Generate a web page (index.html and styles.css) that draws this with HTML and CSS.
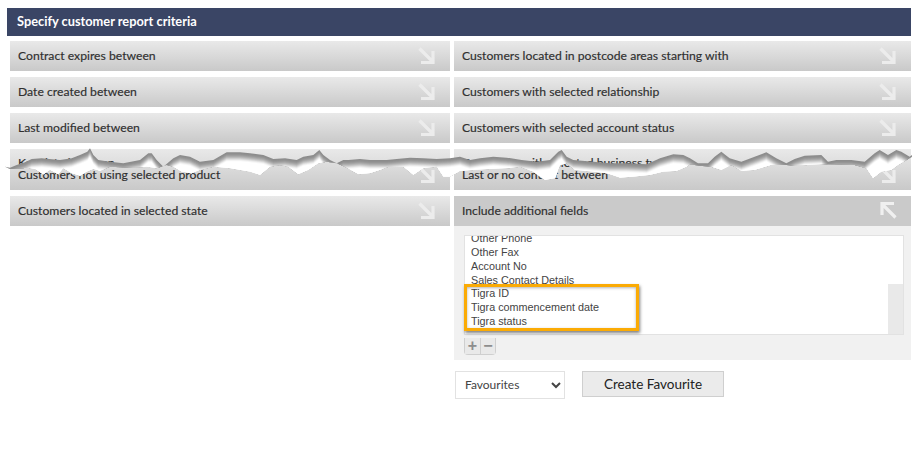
FILE: index.html
```html
<!DOCTYPE html>
<html lang="en">
<head>
<meta charset="utf-8">
<title>Specify customer report criteria</title>
<link rel="stylesheet" href="styles.css">
</head>
<body>
<svg width="0" height="0" class="defs" aria-hidden="true">
  <symbol id="arrow" viewBox="0 0 18 18">
    <path d="M1.5 1.5 L15 15 M15 4 V15.5 H3" fill="none" stroke="currentColor" stroke-width="3.2"/>
  </symbol>
</svg>
<main class="page">
  <h1 class="title">Specify customer report criteria</h1>
  <div class="grid">
    <div class="col">
      <div class="row"><span>Contract expires between</span><svg class="arrow"><use href="#arrow"/></svg></div>
      <div class="row"><span>Date created between</span><svg class="arrow"><use href="#arrow"/></svg></div>
      <div class="row"><span>Last modified between</span><svg class="arrow"><use href="#arrow"/></svg></div>
      <div class="row torn"><span class="cut">Key date between</span><span>Customers not using selected product</span><svg class="arrow"><use href="#arrow"/></svg></div>
      <div class="row"><span>Customers located in selected state</span><svg class="arrow"><use href="#arrow"/></svg></div>
    </div>
    <div class="col">
      <div class="row"><span>Customers located in postcode areas starting with</span><svg class="arrow"><use href="#arrow"/></svg></div>
      <div class="row"><span>Customers with selected relationship</span><svg class="arrow"><use href="#arrow"/></svg></div>
      <div class="row"><span>Customers with selected account status</span><svg class="arrow"><use href="#arrow"/></svg></div>
      <div class="row torn"><span class="cut">Customers with selected business type</span><span>Last or no contact between</span><svg class="arrow"><use href="#arrow"/></svg></div>
      <div class="row open"><span>Include additional fields</span><svg class="arrow up"><use href="#arrow"/></svg></div>
      <div class="panel">
        <div class="listbox">
          <div class="list">
            <div class="items">
              <div>Other Phone</div>
              <div>Other Fax</div>
              <div>Account No</div>
              <div>Sales Contact Details</div>
              <div>Tigra ID</div>
              <div>Tigra commencement date</div>
              <div>Tigra status</div>
            </div>
          </div>
          <div class="thumb"></div>
          <div class="callout"></div>
        </div>
        <div class="steppers"><span>+</span><span>−</span></div>
      </div>
      <div class="actions">
        <select class="fav"><option>Favourites</option></select>
        <button class="create" type="button">Create Favourite</button>
      </div>
    </div>
  </div>
</main>
<svg class="tear" width="918" height="45" viewBox="0 0 2754 135" aria-hidden="true">
  <defs>
    <path id="tearTop" d="M15 65 L30 68 50 60 75 52 95 42 125 40 180 45 215 40 240 30 262 20 270 10 280 30 295 45 330 50 370 55 420 45 445 25 455 25 470 45 490 65 520 40 540 30 570 35 600 50 640 45 680 22 720 22 750 25 790 30 820 42 855 40 890 45 910 35 940 30 958 15 970 30 990 45 1010 55 1030 45 1045 45 1080 42 1110 45 1160 45 1190 42 1230 38 1270 40 1310 42 1350 40 1380 35 1410 45 1440 40 1480 35 1520 38 1565 45 1610 50 1650 45 1675 20 1685 15 1700 35 1720 45 1780 50 1830 55 1880 55 1940 58 1980 40 2020 28 2050 30 2070 40 2094 55 2124 55 2144 35 2164 20 2189 40 2224 50 2264 35 2299 22 2329 40 2359 55 2384 42 2414 32 2464 30 2484 50 2509 45 2554 45 2594 50 2624 25 2639 15 2664 30 2689 15 2704 20 2729 35 2736 30 L2736 135 L15 135 Z"/>
    <clipPath id="tearClip">
      <path d="M15 65 L30 72 50 72 80 68 105 72 130 88 150 75 175 88 190 70 215 85 240 92 260 80 280 72 300 78 330 65 400 68 440 65 470 70 500 60 520 65 545 80 575 85 600 75 640 65 690 70 720 75 750 80 780 90 810 65 840 60 865 65 895 88 925 75 955 55 980 50 1010 55 1035 65 1075 88 1110 85 1140 75 1165 65 1210 65 1240 90 1270 70 1310 65 1330 95 1350 95 1380 78 1420 75 1470 72 1520 70 1560 65 1600 80 1635 105 1665 100 1680 60 1700 55 1725 75 1780 80 1820 85 1860 98 1900 95 1950 90 1990 80 2030 78 2060 65 2070 58 2099 62 2134 65 2164 75 2194 60 2224 78 2264 75 2314 60 2359 60 2384 62 2464 58 2504 58 2564 60 2599 70 2619 100 2644 80 2674 75 2694 60 2736 35 L2736 0 L15 0 Z"/>
    </clipPath>
  </defs>
  <g clip-path="url(#tearClip)">
    <use href="#tearTop" fill="#8c8c8c"/>
    <use href="#tearTop" y="3" fill="#8f8f8f"/>
    <use href="#tearTop" y="6" fill="#969696"/>
    <use href="#tearTop" y="9" fill="#a1a1a1"/>
    <use href="#tearTop" y="12" fill="#afafaf"/>
    <use href="#tearTop" y="15" fill="#c0c0c0"/>
    <use href="#tearTop" y="18" fill="#d3d3d3"/>
    <use href="#tearTop" y="21" fill="#e7e7e7"/>
    <use href="#tearTop" y="24" fill="#f7f7f7"/>
    <use href="#tearTop" y="27" fill="#ffffff"/>
  </g>
</svg>
</body>
</html>
```
FILE: styles.css
```css
* { box-sizing: border-box; }
html, body { margin: 0; background: #fff; }
body { width: 918px; height: 449px; overflow: hidden; position: relative; font-family: Lato, "Liberation Sans", sans-serif; }
.defs { position: absolute; }
.page { padding: 8px 7px 0; }
.title {
  margin: 0;
  height: 28px;
  line-height: 27px;
  padding-left: 10px;
  background: #3a4565;
  color: #fff;
  font-size: 12.8px;
  font-weight: 700;
}
.grid { display: grid; grid-template-columns: 440px 457px; column-gap: 4px; padding: 5px 0 0 3px; }
.col { display: flex; flex-direction: column; gap: 6px; }
.row {
  display: flex;
  align-items: center;
  justify-content: space-between;
  height: 30px;
  padding: 0 14px 0 8px;
  background: linear-gradient(#e9e9e9, #c9c9c9);
  color: #2f2f2f;
  font-size: 12.2px;
  -webkit-text-stroke: .15px #2f2f2f;
}
.row > span { margin-top: -2px; }
.arrow { width: 18px; height: 18px; color: #ececec; margin-top: -1px; }
.up { transform: rotate(180deg); color: #f0f0f0; margin-top: -2px; }
.torn { height: 41px; position: relative; padding-top: 11px; }
.torn .arrow { margin-top: 0; }
.row > .cut { position: absolute; left: 8px; top: 5px; line-height: 18px; margin-top: 0; }
.open { background: #cacaca; }
.panel { margin-top: -6px; background: #f1f1f1; height: 134px; padding: 9px 7px 0 10px; }
.listbox {
  position: relative;
  height: 100px;
  background: #fff;
  border: 1px solid #e2e2e2;
}
.list {
  height: 98px;
  overflow: hidden;
  color: #444;
  font: 10.8px/13.7px "Liberation Sans", Arial, sans-serif;
  padding-left: 6px;
}
.items { margin-top: -3.6px; }
.thumb { position: absolute; right: 0; bottom: 0; width: 15px; height: 50px; background: #e9e9e9; }
.callout {
  position: absolute;
  left: -1px;
  top: 48px;
  width: 175px;
  height: 47px;
  border: 3px solid #fbab05;
  box-shadow: 1px 2px 3px rgba(0,0,0,.5), inset 0 1px 3px rgba(0,0,0,.3);
}
.steppers {
  display: inline-flex;
  height: 17px;
  border: 1px solid #cfcfcf;
  border-top: 0;
  border-radius: 0 0 4px 4px;
  color: #8d8d8d;
  font: 700 16px/15px "Liberation Sans", Arial, sans-serif;
}
.steppers span { width: 15px; text-align: center; background: #e9e9e9; }
.steppers span + span { width: 15px; border-left: 1px solid #cfcfcf; }
.actions { display: flex; align-items: flex-start; gap: 17px; padding: 5px 0 0 1px; }
.fav {
  width: 110px;
  height: 28px;
  background: #fff;
  border: 1px solid #e2e2e2;
  color: #444;
  font: 12px Lato, sans-serif;
  padding: 0 0 2px 5px;
}
.create {
  width: 142px;
  height: 26px;
  background: #ebebeb;
  border: 1px solid #cfcfcf;
  color: #222;
  font: 13.5px Lato, sans-serif;
  padding: 0;
}
.tear { position: absolute; left: 0; top: 145px; }
```
